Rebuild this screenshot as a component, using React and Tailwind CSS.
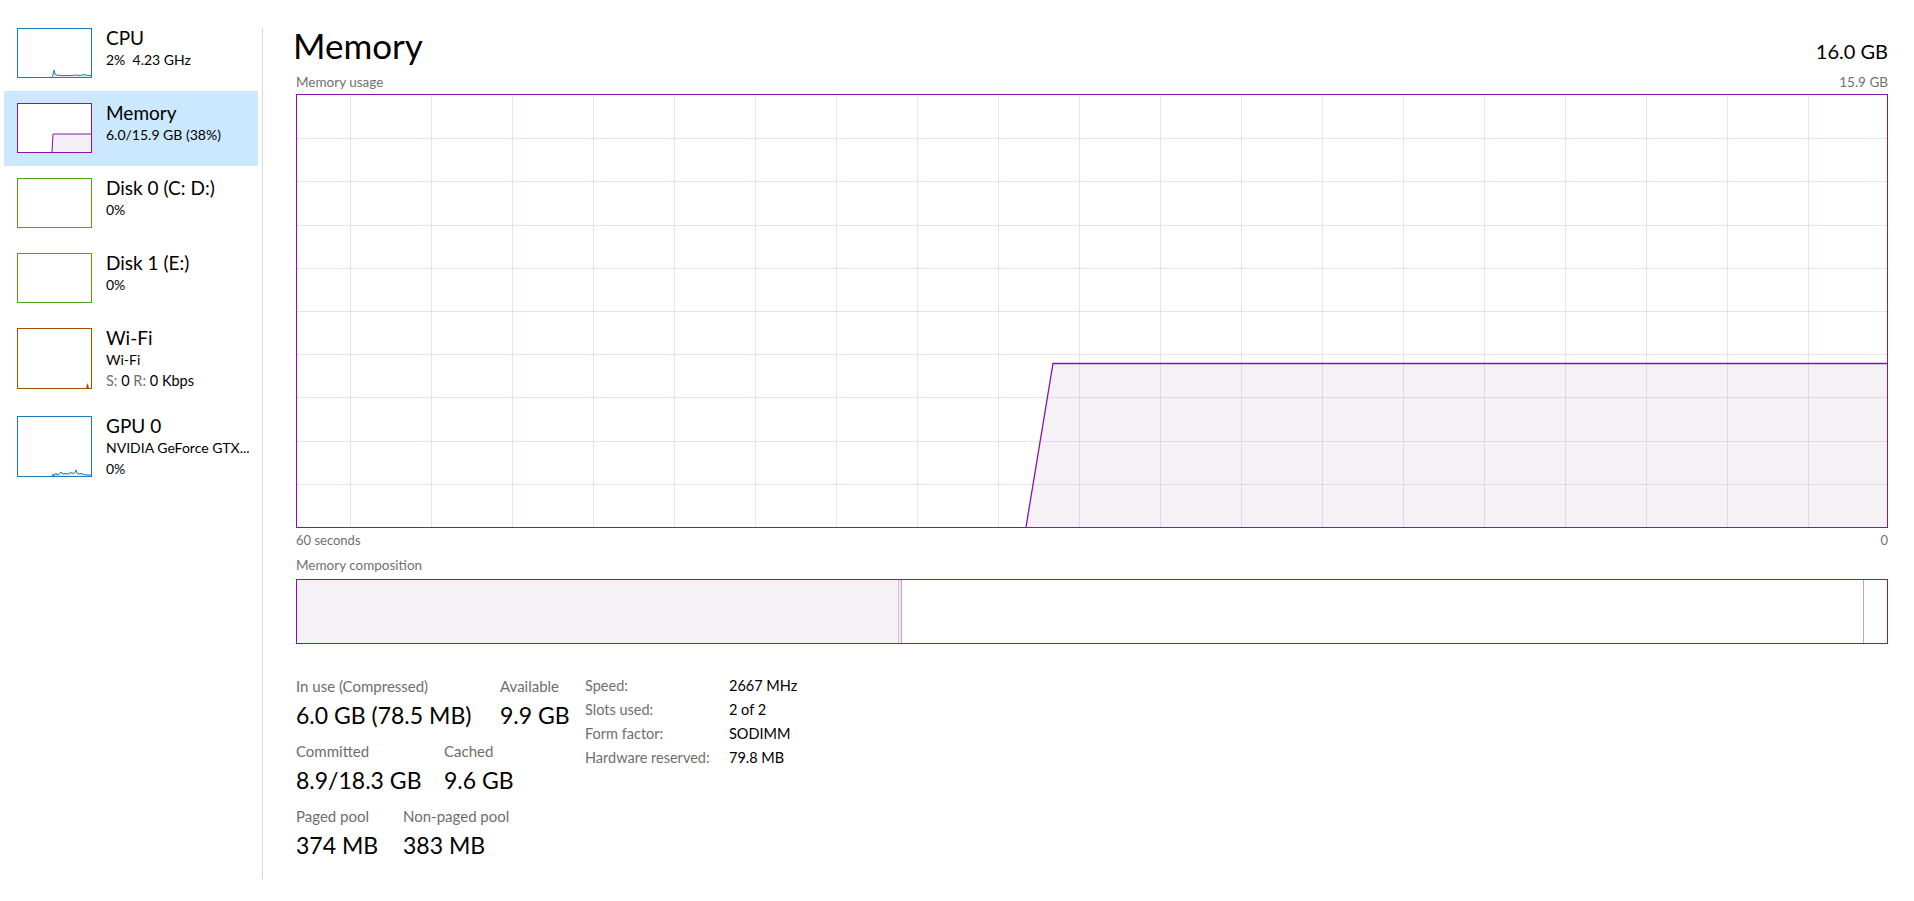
import React from "react";

const FONT = { fontFamily: "Lato, 'Noto Sans', sans-serif" };

const CpuThumb = () => (
  <svg viewBox="0 0 73 48" preserveAspectRatio="none" className="w-full h-full block">
    <polygon
      points="0,48 34,48 35,46 36,41 37,45 38,46 44,46.5 52,46.5 58,46 62,46.5 66,45.5 70,46.5 73,46.5 73,48"
      fill="#e3eff8"
    />
    <polyline
      points="34,48 35,46 36,41 37,45 38,46 44,46.5 52,46.5 58,46 62,46.5 66,45.5 70,46.5 73,46.5"
      fill="none"
      stroke="#1a7dc0"
      strokeWidth="1"
    />
  </svg>
);

const MemThumb = () => (
  <svg viewBox="0 0 73 48" preserveAspectRatio="none" className="w-full h-full block">
    <polygon points="34,48 35,30 73,30 73,48" fill="#f2f0f4" />
    <polyline points="34,48 35,30 73,30" fill="none" stroke="#8b12ae" strokeWidth="1" />
  </svg>
);

const WifiThumb = () => (
  <svg viewBox="0 0 73 59" preserveAspectRatio="none" className="w-full h-full block">
    <polygon points="68,59 69.5,54 71,59" fill="#a74f01" />
  </svg>
);

const GpuThumb = () => (
  <svg viewBox="0 0 73 59" preserveAspectRatio="none" className="w-full h-full block">
    <polygon
      points="34,59 35,57 36,59 38,56 39,58 41,57.5 43,55 45,57 48,56.5 50,57 53,55.5 55,56.5 57,55 58,53 59,56 61,57 63,56.5 66,57.5 70,58 73,58 73,59"
      fill="#e3eff8"
    />
    <polyline
      points="34,59 35,57 36,59 38,56 39,58 41,57.5 43,55 45,57 48,56.5 50,57 53,55.5 55,56.5 57,55 58,53 59,56 61,57 63,56.5 66,57.5 70,58 73,58"
      fill="none"
      stroke="#1a7dc0"
      strokeWidth="1"
    />
  </svg>
);

const SideRow = ({ selected, boxClass, thumb, title, children }) => (
  <div className={`flex gap-[14px] pl-[13px] pt-[12px] pb-[13px] ${selected ? "bg-[#cce8ff]" : ""}`}>
    <div className={`w-[75px] shrink-0 border bg-white ${boxClass}`}>{thumb}</div>
    <div className="-mt-[1px] text-black whitespace-nowrap">
      <div className="text-[19px] leading-[22px]">{title}</div>
      {children}
    </div>
  </div>
);

const UsageChart = () => {
  const vx = [];
  for (let k = 0; k < 19; k++) vx.push(53 + 81 * k);
  const hy = [];
  for (let k = 1; k < 10; k++) hy.push(43.2 * k);
  return (
    <svg viewBox="0 0 1590 432" preserveAspectRatio="none" className="w-full h-full block">
      <polygon points="729,432 756,268.5 1590,268.5 1590,432" fill="#f4f2f5" />
      {vx.map((x) => (
        <line key={"v" + x} x1={x + 0.5} y1="0" x2={x + 0.5} y2="432" stroke="#8b12ae" strokeOpacity="0.13" strokeWidth="1" />
      ))}
      {hy.map((y) => (
        <line key={"h" + y} x1="0" y1={Math.round(y) + 0.5} x2="1590" y2={Math.round(y) + 0.5} stroke="#8b12ae" strokeOpacity="0.13" strokeWidth="1" />
      ))}
      <polyline points="729,432 756,268.5 1590,268.5" fill="none" stroke="#8b12ae" strokeWidth="1.3" />
    </svg>
  );
};

const Stat = ({ label, value, width }) => (
  <div className={`shrink-0 ${width || ""}`}>
    <div className="text-[15px] leading-[18px] text-[#6e6e6e] whitespace-nowrap">{label}</div>
    <div className="mt-[6px] text-[23px] leading-[28px] text-black whitespace-nowrap">{value}</div>
  </div>
);

export default function App() {
  return (
    <div className="flex w-full h-[901px] bg-white overflow-hidden" style={FONT}>
      <div className="w-[258px] shrink-0 pl-[4px] pt-[16px]">
        <SideRow boxClass="h-[50px] border-[#1a7dc0]" thumb={<CpuThumb />} title="CPU">
          <div className="text-[14px] leading-[22px]">2%&nbsp; 4.23 GHz</div>
        </SideRow>
        <SideRow selected boxClass="h-[50px] border-[#8b12ae]" thumb={<MemThumb />} title="Memory">
          <div className="text-[14px] leading-[22px]">6.0/15.9 GB (38%)</div>
        </SideRow>
        <SideRow boxClass="h-[50px] border-[#4da60c]" title="Disk 0 (C: D:)">
          <div className="text-[14px] leading-[22px]">0%</div>
        </SideRow>
        <SideRow boxClass="h-[50px] border-[#4da60c]" title="Disk 1 (E:)">
          <div className="text-[14px] leading-[22px]">0%</div>
        </SideRow>
        <SideRow boxClass="h-[61px] border-[#a74f01]" thumb={<WifiThumb />} title="Wi-Fi">
          <div className="text-[14px] leading-[22px]">Wi-Fi</div>
          <div className="text-[14.5px] leading-[20px]">
            <span className="text-[#707070]">S:</span> 0 <span className="text-[#707070]">R:</span> 0 Kbps
          </div>
        </SideRow>
        <SideRow boxClass="h-[61px] border-[#1a7dc0]" thumb={<GpuThumb />} title="GPU 0">
          <div className="text-[14px] leading-[22px]">NVIDIA GeForce GTX...</div>
          <div className="text-[14px] leading-[20px]">0%</div>
        </SideRow>
      </div>

      <div className="w-[4px] shrink-0" />
      <div className="w-px shrink-0 mt-[28px] h-[851px] bg-[#d9d9d9]" />

      <div className="flex-1 pl-[33px] pr-[26px] pt-[27px]">
        <div className="flex justify-between items-baseline">
          <div className="-ml-[3px] text-[35px] leading-[36px] text-black">Memory</div>
          <div className="text-[20px] leading-[24px] text-black">16.0 GB</div>
        </div>

        <div className="mt-[11px] flex justify-between text-[13.5px] leading-[16px] text-[#707070]">
          <span>Memory usage</span>
          <span>15.9 GB</span>
        </div>

        <div className="mt-[4px] h-[434px] border border-[#8b12ae]">
          <UsageChart />
        </div>

        <div className="mt-[4px] flex justify-between text-[13px] leading-[16px] text-[#707070]">
          <span>60 seconds</span>
          <span>0</span>
        </div>

        <div className="mt-[9px] text-[13.5px] leading-[16px] text-[#707070]">Memory composition</div>

        <div className="mt-[6px] h-[65px] border border-[#8b12ae] flex">
          <div className="w-[602px] bg-[#f4f2f5] border-r border-[#dcc2e5]" />
          <div className="w-[3px] bg-[#efe6f2] border-r border-[#c9a0d6]" />
          <div className="flex-1 border-r border-[#c9a0d6]" />
          <div className="w-[23px]" />
        </div>

        <div className="mt-[33px] flex items-start">
          <div className="w-[289px] shrink-0 flex flex-col gap-[13px]">
            <div className="flex">
              <Stat width="w-[204px]" label="In use (Compressed)" value="6.0 GB (78.5 MB)" />
              <Stat label="Available" value="9.9 GB" />
            </div>
            <div className="flex">
              <Stat width="w-[148px]" label="Committed" value="8.9/18.3 GB" />
              <Stat label="Cached" value="9.6 GB" />
            </div>
            <div className="flex">
              <Stat width="w-[107px]" label="Paged pool" value="374 MB" />
              <Stat label="Non-paged pool" value="383 MB" />
            </div>
          </div>
          <div className="-mt-[3px] grid grid-cols-[144px_auto] text-[14.5px] leading-[24px] whitespace-nowrap">
            <span className="text-[#6e6e6e]">Speed:</span>
            <span className="text-black">2667 MHz</span>
            <span className="text-[#6e6e6e]">Slots used:</span>
            <span className="text-black">2 of 2</span>
            <span className="text-[#6e6e6e]">Form factor:</span>
            <span className="text-black">SODIMM</span>
            <span className="text-[#6e6e6e]">Hardware reserved:</span>
            <span className="text-black">79.8 MB</span>
          </div>
        </div>
      </div>
    </div>
  );
}
